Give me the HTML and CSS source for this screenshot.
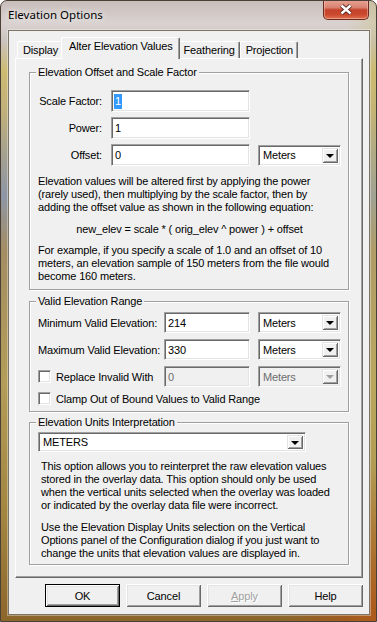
FILE: index.html
```html
<!DOCTYPE html>
<html lang="en">
<head>
    <meta charset="UTF-8">
    <meta name="viewport" content="width=device-width, initial-scale=1.0">
    <title>Elevation Options</title>
    <link rel="stylesheet" href="styles.css">
</head>
<body>
    <div class="window">
        <div class="titlebar">
            <span class="title">Elevation Options</span>
            <div class="close-btn">
                <svg width="14" height="11" viewBox="0 0 14 11">
                    <path d="M2.5 1.5 L11.5 9.5 M11.5 1.5 L2.5 9.5" stroke="#4a1e16" stroke-width="4.2" fill="none"/>
                    <path d="M2.5 1.5 L11.5 9.5 M11.5 1.5 L2.5 9.5" stroke="#fff" stroke-width="2.4" fill="none"/>
                </svg>
            </div>
        </div>

        <div class="client">
            <div class="tabs">
                <div class="tab">Display</div>
                <div class="tab active">Alter Elevation Values</div>
                <div class="tab">Feathering</div>
                <div class="tab">Projection</div>
            </div>

            <div class="panel">
                <fieldset class="group">
                    <legend>Elevation Offset and Scale Factor</legend>
                    <div class="row">
                        <span class="lbl lbl-short">Scale Factor:</span>
                        <div class="edit edit-long"><span class="selected">1</span></div>
                    </div>
                    <div class="row row-gap">
                        <span class="lbl lbl-short">Power:</span>
                        <div class="edit edit-long">1</div>
                    </div>
                    <div class="row row-gap">
                        <span class="lbl lbl-short">Offset:</span>
                        <div class="edit edit-long">0</div>
                        <div class="combo combo-unit">
                            <span class="combo-text">Meters</span>
                            <span class="drop"><i class="arrow"></i></span>
                        </div>
                    </div>
                    <p class="note first">Elevation values will be altered first by applying the power (rarely used), then multiplying by the scale factor, then by adding the offset value as shown in the following equation:</p>
                    <p class="equation">new_elev = scale * ( orig_elev ^ power ) + offset</p>
                    <p class="note">For example, if you specify a scale of 1.0 and an offset of 10 meters, an elevation sample of 150 meters from the file would become 160 meters.</p>
                </fieldset>

                <fieldset class="group group-range">
                    <legend>Valid Elevation Range</legend>
                    <div class="row">
                        <span class="lbl lbl-long">Minimum Valid Elevation:</span>
                        <div class="edit edit-short">214</div>
                        <div class="combo combo-unit">
                            <span class="combo-text">Meters</span>
                            <span class="drop"><i class="arrow"></i></span>
                        </div>
                    </div>
                    <div class="row row-gap">
                        <span class="lbl lbl-long">Maximum Valid Elevation:</span>
                        <div class="edit edit-short">330</div>
                        <div class="combo combo-unit">
                            <span class="combo-text">Meters</span>
                            <span class="drop"><i class="arrow"></i></span>
                        </div>
                    </div>
                    <div class="row row-gap">
                        <span class="check"></span>
                        <span class="lbl lbl-check">Replace Invalid With</span>
                        <div class="edit edit-short disabled">0</div>
                        <div class="combo combo-unit disabled">
                            <span class="combo-text">Meters</span>
                            <span class="drop"><i class="arrow"></i></span>
                        </div>
                    </div>
                    <div class="row row-check">
                        <span class="check"></span>
                        <span class="lbl">Clamp Out of Bound Values to Valid Range</span>
                    </div>
                </fieldset>

                <fieldset class="group group-units">
                    <legend>Elevation Units Interpretation</legend>
                    <div class="combo combo-wide">
                        <span class="combo-text">METERS</span>
                        <span class="drop"><i class="arrow"></i></span>
                    </div>
                    <p class="note units first">This option allows you to reinterpret the raw elevation values stored in the overlay data. This option should only be used when the vertical units selected when the overlay was loaded or indicated by the overlay data file were incorrect.</p>
                    <p class="note units second">Use the Elevation Display Units selection on the Vertical Options panel of the Configuration dialog if you just want to change the units that elevation values are displayed in.</p>
                </fieldset>
            </div>

            <div class="buttons">
                <div class="btn btn-default">OK</div>
                <div class="btn">Cancel</div>
                <div class="btn disabled"><u>A</u>pply</div>
                <div class="btn">Help</div>
            </div>
        </div>
    </div>
</body>
</html>
```

FILE: styles.css
```css
body {
    margin: 0;
    font-family: "Liberation Sans", Arial, sans-serif;
    font-size: 11px;
    letter-spacing: -0.15px;
    color: #000;
    background: #fff;
}

/* aero frame */
.window {
    width: 377px;
    height: 622px;
    box-sizing: border-box;
    border: 1px solid #4b4036;
    border-radius: 7px 7px 0 0;
    display: flex;
    flex-direction: column;
    overflow: hidden;
    background:
        radial-gradient(ellipse 90px 160px at 100% 100%, rgba(176, 82, 20, 0.85), rgba(176, 82, 20, 0) 100%),
        linear-gradient(to right, rgba(255, 255, 255, 0) 0, rgba(255, 255, 255, 0) 92%, rgba(200, 190, 110, 0.35) 100%),
        linear-gradient(to bottom, #c8bebb 0, #d9d2d0 22px, #cbc3bf 40px, #cdbb72 70px, #c1b07a 110px, #a7a28e 150px, #8e96a5 195px, #a48d62 250px, #b39d58 380px, #a1843f 520px, #8c652b 622px);
}
.titlebar {
    height: 29px;
    display: flex;
    justify-content: space-between;
    align-items: flex-start;
    padding-left: 7px;
}
.title {
    font-family: "Noto Sans", "Open Sans", sans-serif;
    font-size: 11.5px;
    letter-spacing: 0;
    margin-top: 6px;
    text-shadow: 0 0 6px rgba(255, 255, 255, 0.9), 0 0 10px rgba(255, 255, 255, 0.7);
}
.close-btn {
    width: 46px;
    height: 20px;
    box-sizing: border-box;
    margin: -1px 7px 0 0;
    border: 1px solid #6b2b20;
    border-top: 0;
    border-radius: 0 0 5px 5px;
    background: linear-gradient(to bottom, #e8a496 0, #d98170 40%, #c5432b 52%, #c9472d 75%, #e0714f 100%);
    box-shadow: inset 0 0 0 1px rgba(255, 210, 200, 0.45);
    display: flex;
    align-items: center;
    justify-content: center;
}

.client {
    flex: 1;
    margin: 0 6px 6px 7px;
    background: #f0f0f0;
    border: 1px solid #7d7468;
    box-shadow: 0 0 0 1px rgba(255, 255, 255, 0.35);
    padding: 6px 6px 0 6px;
    display: flex;
    flex-direction: column;
}

/* tabs */
.tabs {
    display: flex;
    align-items: flex-end;
    height: 21px;
    padding-left: 2px;
}
.tab {
    height: 17px;
    box-sizing: border-box;
    padding: 0 4px 0 5px;
    border: 1px solid;
    border-color: #fff #696969 transparent #fff;
    border-bottom: 0;
    border-radius: 2px 2px 0 0;
    box-shadow: inset -1px 0 0 #a0a0a0;
    line-height: 16px;
}
.tab.active {
    position: relative;
    z-index: 2;
    height: 22px;
    margin: 0 -2px -1px;
    padding: 0 6px 0 7px;
    background: #f0f0f0;
    line-height: 17px;
}

.panel {
    flex: 1;
    border: 1px solid;
    border-color: #fff #696969 #696969 #fff;
    box-shadow: inset -1px -1px 0 #a0a0a0;
    padding: 7px 13px 0;
    display: flex;
    flex-direction: column;
}

/* group boxes */
.group {
    margin: 0;
    min-width: 0;
    border: 1px solid #a0a0a0;
    box-shadow: inset 1px 1px 0 #fff, 1px 1px 0 #fff;
    padding: 11px 7px 6px 8px;
}
.group legend {
    margin-left: -2px;
    padding: 0 2px;
    line-height: 13px;
    background: #f0f0f0;
}
.group-range {
    margin-top: 5px;
    padding-top: 4px;
}
.group-units {
    margin-top: 4px;
    padding-top: 3px;
    padding-bottom: 4px;
}

.row {
    display: flex;
    align-items: center;
}
.row-gap {
    margin-top: 5px;
}
.group-range .row-gap {
    margin-top: 6px;
}
.row-check {
    margin-top: 5px;
}
.lbl {
    white-space: nowrap;
}
.lbl-short {
    width: 64px;
    margin-right: 9px;
    text-align: right;
}
.lbl-long {
    width: 126px;
}
.lbl-check {
    width: 108px;
}

/* edit fields */
.edit {
    height: 22px;
    box-sizing: border-box;
    border: 1px solid;
    border-color: #a0a0a0 #fff #fff #a0a0a0;
    box-shadow: inset 1px 1px 0 #696969, inset -1px -1px 0 #e3e3e3;
    background: #fff;
    padding-left: 3px;
    display: flex;
    align-items: center;
}
.group-range .edit {
    height: 21px;
}
.edit-long {
    width: 139px;
}
.edit-short {
    width: 86px;
}
.edit.disabled {
    background: #f0f0f0;
    color: #6d6d6d;
}
.selected {
    background: #3399ff;
    color: #fff;
    padding: 1px 1px 2px;
    margin-left: -1px;
}

/* combo boxes */
.combo {
    height: 21px;
    box-sizing: border-box;
    border: 1px solid;
    border-color: #a0a0a0 #fff #fff #a0a0a0;
    box-shadow: inset 1px 1px 0 #696969, inset -1px -1px 0 #e3e3e3;
    background: #fff;
    padding: 2px 2px 2px 4px;
    display: flex;
    align-items: center;
}
.combo-unit {
    width: 83px;
    margin-left: 8px;
}
.combo-wide {
    width: 268px;
    height: 20px;
}
.combo-text {
    flex: 1;
}
.drop {
    width: 16px;
    height: 100%;
    box-sizing: border-box;
    background: #f0f0f0;
    box-shadow: inset 1px 1px 0 #e3e3e3, inset -1px -1px 0 #696969, inset 2px 2px 0 #fff, inset -2px -2px 0 #a0a0a0;
    display: flex;
    align-items: center;
    justify-content: center;
}
.arrow {
    width: 0;
    height: 0;
    border-left: 4px solid transparent;
    border-right: 4px solid transparent;
    border-top: 4px solid #000;
    margin-top: 1px;
}
.combo.disabled {
    background: #f0f0f0;
    color: #6d6d6d;
}
.combo.disabled .arrow {
    border-top-color: #a0a0a0;
}

.check {
    width: 13px;
    height: 13px;
    box-sizing: border-box;
    border: 1px solid;
    border-color: #a0a0a0 #fff #fff #a0a0a0;
    box-shadow: inset 1px 1px 0 #696969, inset -1px -1px 0 #e3e3e3;
    background: #fff;
    margin-right: 5px;
    flex: none;
}

/* texts */
.note, .equation {
    margin: 0;
    line-height: 13px;
}
.note.first {
    margin-top: 9px;
}
.equation {
    margin-top: 9px;
    margin-bottom: 8px;
    text-align: center;
}
.note.units {
    margin-left: 3px;
}
.note.units.first {
    margin-top: 8px;
}
.note.units.second {
    margin-top: 9px;
}

/* dialog buttons */
.buttons {
    display: flex;
    justify-content: flex-end;
    gap: 6px;
    margin: 6px 0 7px;
}
.btn {
    width: 75px;
    height: 23px;
    box-sizing: border-box;
    background: #f0f0f0;
    box-shadow: inset 1px 1px 0 #fff, inset -1px -1px 0 #696969, inset 2px 2px 0 #e3e3e3, inset -2px -2px 0 #a0a0a0;
    display: flex;
    align-items: center;
    justify-content: center;
}
.btn-default {
    border: 1px solid #000;
}
.btn.disabled {
    color: #a0a0a0;
    text-shadow: 1px 1px 0 #fff;
}
```
